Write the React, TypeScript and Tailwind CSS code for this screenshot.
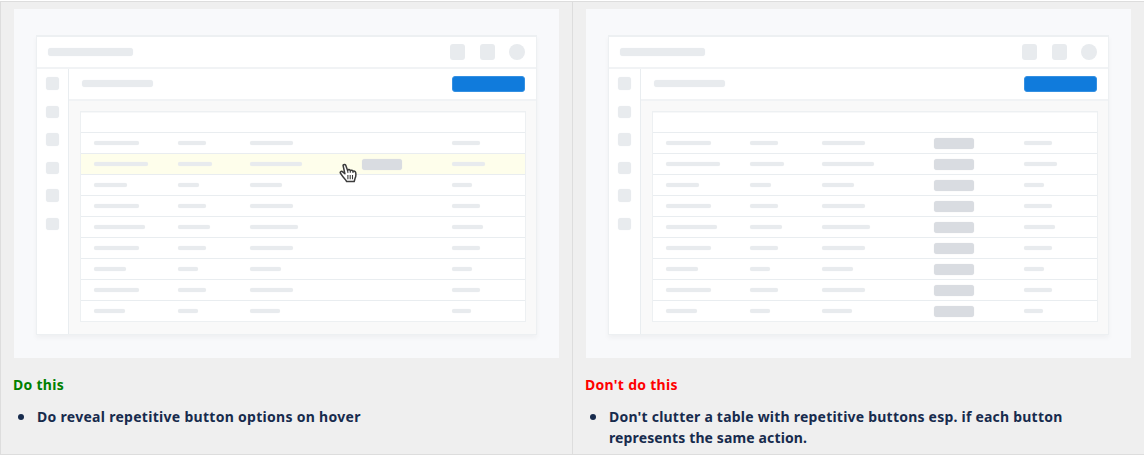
import React from "react";

type Row = [string, string, string, string];

const rows: Row[] = [
  ["w-[45px]", "w-[28px]", "w-[43px]", "w-[28px]"],
  ["w-[54px]", "w-[34px]", "w-[52px]", "w-[33px]"],
  ["w-[33px]", "w-[21px]", "w-[32px]", "w-[20px]"],
  ["w-[45px]", "w-[28px]", "w-[43px]", "w-[28px]"],
  ["w-[51px]", "w-[32px]", "w-[48px]", "w-[31px]"],
  ["w-[45px]", "w-[28px]", "w-[43px]", "w-[28px]"],
  ["w-[32px]", "w-[20px]", "w-[31px]", "w-[20px]"],
  ["w-[45px]", "w-[28px]", "w-[43px]", "w-[28px]"],
  ["w-[31px]", "w-[20px]", "w-[30px]", "w-[19px]"],
];

const navGaps = ["mt-0", "mt-[16px]", "mt-[15px]", "mt-[16px]", "mt-[15px]", "mt-[16px]"];

function Bar({ width }: { width: string }) {
  return <div className={`h-[4px] rounded-full bg-[#e8ebee] shadow-[0_0_1px_#e8ebee] ${width}`} />;
}

function HandCursor() {
  return (
    <svg className="absolute left-[258px] top-[9px] z-10 h-[21px] w-[20px]" viewBox="0 0 20 21">
      <path
        d="M4.1 2.5C4 1.2 6.2.9 6.8 2.4L8.6 7.4C9 6.2 11 6.3 11.3 7.7C12 6.8 13.7 7 14 8.4C14.9 7.7 16.4 8.2 16.7 9.7C17.1 12 17 13.4 16.1 15.2L15.2 18.5L7.7 18.6C6.9 16.7 5.4 15.5 4.2 14.1L1.5 10.3C.6 8.8 2.4 7.6 3.7 8.9L5.9 10.8Z"
        fill="white"
        stroke="#3c3c3c"
        strokeWidth="1.5"
        strokeLinejoin="round"
      />
      <path
        d="M8.6 7.4L9 9.8M11.3 7.7V9.8M14 8.4V10M8.9 12V16.2M11.2 12V16.2M13.5 12V16.2"
        fill="none"
        stroke="#3c3c3c"
        strokeWidth="1.1"
      />
    </svg>
  );
}

function Table({ reveal }: { reveal: boolean }) {
  return (
    <div className="relative ml-[11px] mt-[10px] w-[446px] border border-[#edf0f2] bg-white">
      <div className="h-[20px] shadow-[inset_0_1px_0_#f7f8f9]" />
      {rows.map((row, i) => {
        const hovered = reveal && i === 1;
        return (
          <div
            key={i}
            className={`grid h-[21px] grid-cols-[84px_72px_112px_90px_1fr] items-center border-t border-[#e9edf0] pl-[13px] ${hovered ? "relative bg-[#fefeeb]" : ""}`}
          >
            <Bar width={row[0]} />
            <Bar width={row[1]} />
            <Bar width={row[2]} />
            <div>
              {(!reveal || hovered) && (
                <div className="h-[11px] w-[40px] rounded-[3px] bg-[#d9dce1] shadow-[0_0_1px_#d9dce1]" />
              )}
            </div>
            <Bar width={row[3]} />
            {hovered && <HandCursor />}
          </div>
        );
      })}
    </div>
  );
}

function Mockup({ reveal }: { reveal: boolean }) {
  return (
    <div className="h-[349px] w-[545px] bg-[#f8f9fb] pl-[22px] pt-[26px]">
      <div className="flex h-[300px] w-[501px] flex-col border border-t-2 border-[#edf0f2] bg-white shadow-[0_3px_5px_rgba(0,0,0,0.04)]">
        <div className="flex h-[32px] shrink-0 items-center border-b-2 border-[#f1f3f5] pl-[11px] pr-[11px]">
          <div className="h-[8px] w-[85px] rounded-[3px] bg-[#e8ebee] shadow-[0_0_1px_#e8ebee]" />
          <div className="ml-auto flex">
            <div className="mr-[15px] h-[16px] w-[15px] rounded-[3px] bg-[#e8ebee]" />
            <div className="mr-[14px] h-[16px] w-[15px] rounded-[3px] bg-[#e8ebee]" />
            <div className="size-[16px] rounded-full bg-[#e8ebee]" />
          </div>
        </div>
        <div className="flex min-h-0 flex-1">
          <div className="flex w-[32px] flex-col border-r border-[#e9edf0] pl-[9px] pt-[8px]">
            {navGaps.map((gap, i) => (
              <div key={i} className={`h-[12.5px] w-[13px] shrink-0 rounded-[3px] bg-[#e8ebee] shadow-[0_0_1px_#e8ebee] ${gap}`} />
            ))}
          </div>
          <div className="flex-1 bg-[#f9f9f9]">
            <div className="flex h-[32px] items-center justify-between border-b-2 border-[#f1f3f5] bg-white pl-[13px] pr-[11px]">
              <div className="mb-px h-[7px] w-[71px] rounded-[3px] bg-[#e8ebee] shadow-[0_0_1px_#e8ebee]" />
              <div className="h-[16px] w-[73px] rounded-[3px] border border-[#3490e2] bg-[#107bdc]" />
            </div>
            <Table reveal={reveal} />
          </div>
        </div>
      </div>
    </div>
  );
}

interface CardProps {
  reveal: boolean;
  title: string;
  titleColor: string;
  children: React.ReactNode;
}

function Card({ reveal, title, titleColor, children }: CardProps) {
  return (
    <section className="w-[572px] border-l border-[#dddddd] pl-[12px] pt-[7px]">
      <div className="pl-px">
        <Mockup reveal={reveal} />
      </div>
      <h2 className={`mt-[16px] text-[14px] font-bold leading-[21px] tracking-[0.29px] ${titleColor}`}>{title}</h2>
      <ul className="mt-[11px] w-[540px]">
        <li className="flex text-[14px] font-bold leading-[21px] text-[#172b4d]">
          <span className="ml-[5px] mr-[13px] mt-[8px] size-[6px] shrink-0 rounded-full bg-[#172b4d]" />
          <span>{children}</span>
        </li>
      </ul>
    </section>
  );
}

export default function App() {
  return (
    <main className="h-[455px] w-[1144px] overflow-hidden bg-white pt-px font-['Noto_Sans',sans-serif]">
      <div className="flex h-[454px] border-y border-[#dddddd] bg-[#efefef]">
        <Card reveal title="Do this" titleColor="text-[#008000]">
          <span className="tracking-[0.29px]">Do reveal repetitive button options on hover</span>
        </Card>
        <Card reveal={false} title="Don't do this" titleColor="text-[#ff0000]">
          <span className="tracking-[0.22px]">Don't clutter a table with repetitive buttons esp. if each button</span>
          <br />
          <span className="tracking-[0.13px]">represents the same action.</span>
        </Card>
      </div>
    </main>
  );
}
